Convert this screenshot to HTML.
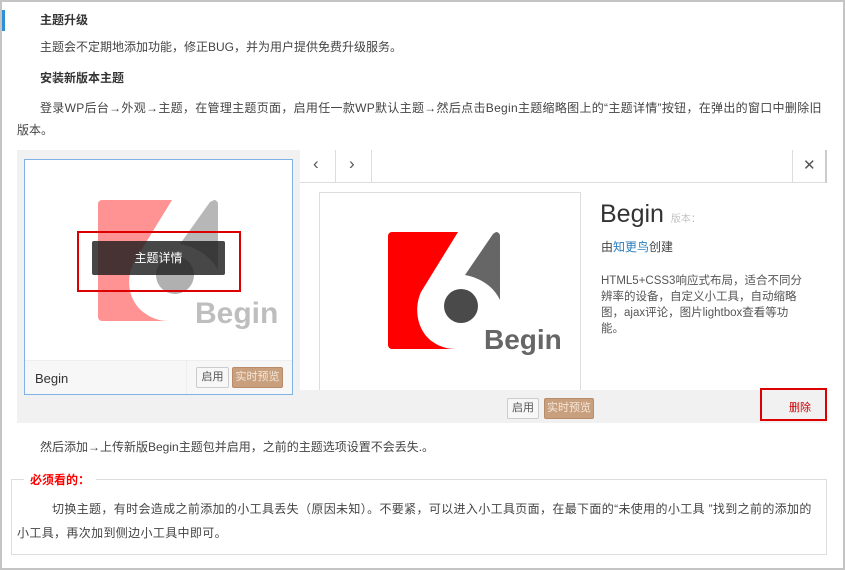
<!DOCTYPE html>
<html><head><meta charset="utf-8"><style>
*{margin:0;padding:0;box-sizing:border-box}
body{width:845px;height:570px;background:#fff;position:relative;overflow:hidden;font-family:"Liberation Sans","Noto Sans CJK SC",sans-serif;font-size:12px;color:#444}
.a{position:absolute;white-space:nowrap}
.b{font-weight:bold;color:#333}
.btn{position:absolute;height:21px;font-size:11px;line-height:19px;text-align:center;border:1px solid #ccc;background:#f7f7f7;color:#555;border-radius:2px}
.pv{background:#c8a07e;border-color:#b88c6a;color:#f5e6d8}
</style></head><body>
<div class="a" style="left:0;top:0;width:845px;height:570px;border:2px solid #c4c4c4"></div>
<div class="a" style="left:2px;top:10px;width:3px;height:21px;background:#2f8fd6"></div>
<div class="a b" style="left:40px;top:11px">主题升级</div>
<div class="a" style="left:40px;top:38px">主题会不定期地添加功能，修正BUG，并为用户提供免费升级服务。</div>
<div class="a b" style="left:40px;top:69px">安装新版本主题</div>
<div class="a" style="left:40px;top:99px;letter-spacing:0.3px">登录WP后台→外观→主题，在管理主题页面，启用任一款WP默认主题→然后点击Begin主题缩略图上的“主题详情”按钮，在弹出的窗口中删除旧</div>
<div class="a" style="left:17px;top:121px">版本。</div>

<div class="a" style="left:17px;top:150px;width:283px;height:273px;background:#f1f1f1"></div>
<div class="a" style="left:24px;top:159px;width:269px;height:236px;background:#fff;border:1px solid #7fb2e5"></div>
<svg class="a" style="left:98px;top:200px;opacity:.42" width="185" height="130" viewBox="0 0 185 130">
<path d="M4,0 H74 L36,62 C26,82 32,104 48,114 C55,119 63,121 71,121 H4 a4 4 0 0 1 -4 -4 V4 a4 4 0 0 1 4 -4Z" fill="#f00"/>
<path d="M116,0 a4 4 0 0 1 4 4 V70 C113,57 99,47 82,44 L112,2 Z" fill="#555"/>
<circle cx="77" cy="75" r="19" fill="#444"/>
<text x="97" y="123" font-family="Liberation Sans" font-weight="bold" font-size="30" fill="#666">Begin</text>
</svg>
<div class="a" style="left:92px;top:241px;width:133px;height:34px;background:rgba(30,30,30,.82);color:#fff;text-align:center;line-height:34px;font-size:12px;border-radius:2px">主题详情</div>
<div class="a" style="left:77px;top:231px;width:164px;height:61px;border:2px solid #d00"></div>
<div class="a" style="left:25px;top:360px;width:267px;height:34px;background:#f7f7f7;border-top:1px solid #eee"></div>
<div class="a" style="left:186px;top:361px;width:1px;height:33px;background:#eee"></div>
<div class="a" style="left:35px;top:371px;font-size:13px;color:#333">Begin</div>
<div class="btn" style="left:196px;top:367px;width:33px">启用</div>
<div class="btn pv" style="left:232px;top:367px;width:51px">实时预览</div>

<div class="a" style="left:300px;top:150px;width:527px;height:273px;background:#fff"></div>
<div class="a" style="left:300px;top:150px;width:527px;height:33px;border-bottom:1px solid #ddd"></div>
<div class="a" style="left:335px;top:150px;width:1px;height:33px;background:#ddd"></div>
<div class="a" style="left:371px;top:150px;width:1px;height:33px;background:#ddd"></div>
<div class="a" style="left:792px;top:150px;width:1px;height:33px;background:#ddd"></div>
<div class="a" style="left:825px;top:150px;width:2px;height:33px;background:#ccc"></div>
<div class="a" style="left:313px;top:154px;font-size:17px;color:#555">‹</div>
<div class="a" style="left:349px;top:154px;font-size:17px;color:#555">›</div>
<div class="a" style="left:803px;top:156px;font-size:15px;color:#555">✕</div>
<div class="a" style="left:319px;top:192px;width:262px;height:200px;border:1px solid #ddd;border-bottom:none"></div>
<svg class="a" style="left:388px;top:232px" width="185" height="130" viewBox="0 0 185 130">
<path d="M4,0 H70 L33,60 C25,78 30,100 45,110 C52,115 60,117 68,117 H4 a4 4 0 0 1 -4 -4 V4 a4 4 0 0 1 4 -4Z" fill="#f00"/>
<path d="M108,0 a4 4 0 0 1 4 4 V68 C106,55 93,46 77,43 L105,2 Z" fill="#666"/>
<circle cx="73" cy="74" r="17" fill="#4a4a4a"/>
<text x="96" y="117" font-family="Liberation Sans" font-weight="bold" font-size="28" fill="#666">Begin</text>
</svg>
<div class="a" style="left:600px;top:200px;font-size:25px;color:#333;font-weight:300">Begin <span style="font-size:10px;color:#aaa">版本：</span></div>
<div class="a" style="left:601px;top:238px;color:#444">由<span style="color:#2a7fbf">知更鸟</span>创建</div>
<div class="a" style="left:601px;top:273px;line-height:16px;font-size:11.5px;color:#555">HTML5+CSS3响应式布局，适合不同分<br>辨率的设备，自定义小工具，自动缩略<br>图，ajax评论，图片lightbox查看等功<br>能。</div>
<div class="a" style="left:300px;top:390px;width:527px;height:33px;background:#f1f1f1"></div>
<div class="btn" style="left:507px;top:398px;width:32px">启用</div>
<div class="btn pv" style="left:544px;top:398px;width:50px">实时预览</div>
<div class="a" style="left:760px;top:388px;width:67px;height:33px;border:2px solid #d00"></div>
<div class="a" style="left:789px;top:399px;font-size:11px;color:#c00">删除</div>

<div class="a" style="left:40px;top:438px">然后添加→上传新版Begin主题包并启用，之前的主题选项设置不会丢失.。</div>
<div class="a" style="left:11px;top:479px;width:816px;height:76px;border:1px solid #ddd"></div>
<div class="a" style="left:24px;top:471px;padding:0 6px;background:#fff;color:#f00;font-weight:bold">必须看的：</div>
<div class="a" style="left:52px;top:500px;letter-spacing:0.35px">切换主题，有时会造成之前添加的小工具丢失（原因未知）。不要紧，可以进入小工具页面，在最下面的“未使用的小工具 ”找到之前的添加的</div>
<div class="a" style="left:17px;top:524px;letter-spacing:0.35px">小工具，再次加到侧边小工具中即可。</div>
</body></html>
